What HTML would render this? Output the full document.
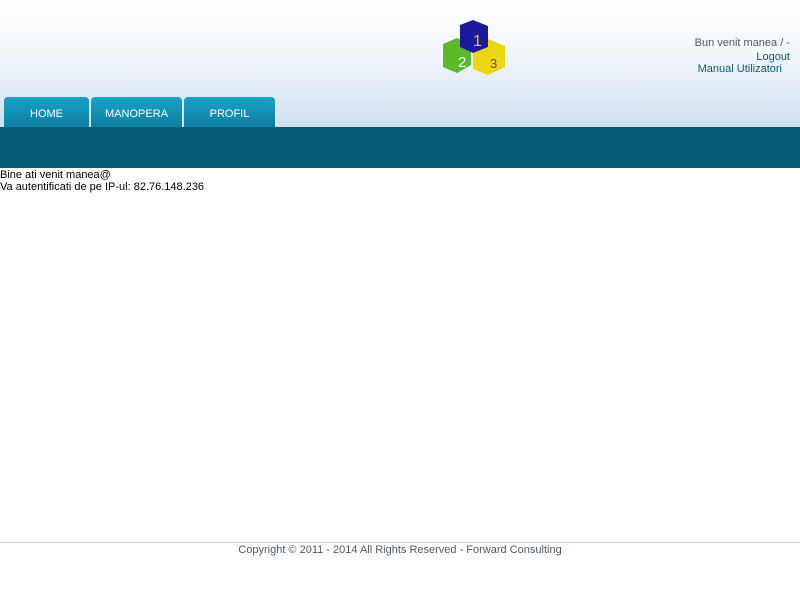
<!DOCTYPE html>
<html><head><meta charset="utf-8"><style>
body{margin:0;width:800px;height:600px;font-family:"Liberation Sans",sans-serif;background:#fff;position:relative;overflow:hidden}
.hdr{position:absolute;left:0;top:0;width:800px;height:127px;background:linear-gradient(#ffffff 0%,#f3f7fb 40%,#cfe0ee 100%)}
.tab{position:absolute;top:97px;height:30px;background:linear-gradient(#18a2c8,#0f7fa0);border-radius:4px 4px 0 0;color:#fff;font-size:11px;text-align:center;line-height:34px}
.bar{position:absolute;left:0;top:127px;width:800px;height:41px;background:#065a71}
.txt{position:absolute;left:0;top:169px;font-size:11px;line-height:12px;color:#000}
.r{position:absolute;right:10px;font-size:11px;text-align:right}
.ft{position:absolute;left:0;top:542px;width:800px;border-top:1px solid #ccc;text-align:center;font-size:11px;color:#4a5a6a;padding-top:1px}
</style></head><body>
<div class="hdr"></div>
<svg style="position:absolute;left:440px;top:18px" width="68" height="60" viewBox="0 0 68 60">
<polygon points="3,26 17,20 31,26 31,47 17,55 3,49" fill="#5cb82a"/>
<polygon points="33,28 48,21 65,28 65,49 48,57 33,51" fill="#ecd514"/>
<polygon points="20,7 33,2 48,8 48,29 33,35 20,29" fill="#1a1a9a"/>
<text x="33" y="28" font-size="16" fill="#e6c830" font-family="Liberation Sans">1</text>
<text x="18" y="49" font-size="15" fill="#fff" font-family="Liberation Sans">2</text>
<text x="50" y="50" font-size="13" fill="#7a3a9a" font-family="Liberation Sans">3</text>
</svg>
<div class="r" style="top:37px;color:#556">Bun venit manea / -</div>
<div class="r" style="top:51px;color:#0a5a7a">Logout</div>
<div class="r" style="top:63px;right:18px;color:#0a5a7a">Manual Utilizatori</div>
<div class="tab" style="left:4px;width:85px">HOME</div>
<div class="tab" style="left:91px;width:91px">MANOPERA</div>
<div class="tab" style="left:184px;width:91px">PROFIL</div>
<div class="bar"></div>
<div class="txt">Bine ati venit manea@<br>Va autentificati de pe IP-ul: 82.76.148.236</div>
<div class="ft">Copyright © 2011 - 2014 All Rights Reserved - Forward Consulting</div>
</body></html>
